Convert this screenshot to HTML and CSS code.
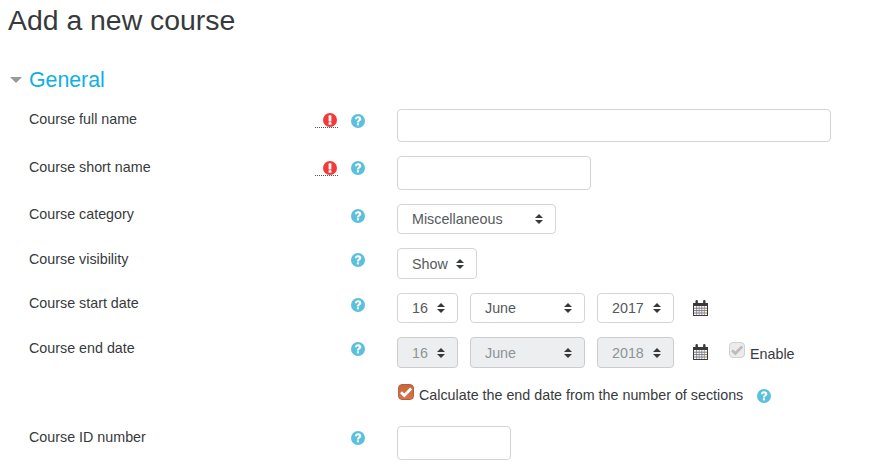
FILE: index.html
```html
<!DOCTYPE html>
<html lang="en">
<head>
  <meta charset="UTF-8" />
  <title>Add a new course</title>
  <link rel="stylesheet" href="styles.css">
</head>
<body>
  <svg class="defs" width="0" height="0">
    <symbol id="i-help" viewBox="0 0 14 14">
      <circle cx="7" cy="7" r="7" fill="#5bc0de"/>
      <path d="M3.9 5.2C4 3.4 5.3 2.3 7.1 2.3c1.9 0 3.2 1.1 3.2 2.7 0 1.1-.6 1.7-1.5 2.3-.6.4-.8.7-.8 1.3H5.900c0-1.200.4-1.800 1.200-2.400.6-.4.900-.7.900-1.100 0-.5-.4-.9-1-.9-.7 0-1 .5-1.100 1.100z" fill="#fff"/>
      <rect x="5.900" y="9.300" width="2.100" height="2.100" fill="#fff"/>
    </symbol>
    <symbol id="i-req" viewBox="0 0 14 14">
      <circle cx="7" cy="7" r="7" fill="#f33a3a"/>
      <rect x="5.600" y="2.200" width="2.800" height="6.200" rx=".5" fill="#fff"/>
      <rect x="5.600" y="9.300" width="2.800" height="2.500" rx=".4" fill="#fff"/>
    </symbol>
    <symbol id="i-arrows" viewBox="0 0 8 10">
      <path d="M4 0l4 4H0zM4 10L0 6h8z" fill="#373a3c"/>
    </symbol>
    <symbol id="i-cal" viewBox="0 0 15 16">
      <path d="M0 3h15v13H0z" fill="#3a3a3a"/>
      <path d="M1 6h13v9H1z" fill="#fff"/>
      <path d="M1 8.200h13M1 10.600h13M1 13h13" stroke="#555" stroke-width=".8"/>
      <path d="M3.600 6v9M8.800 6v9" stroke="#7a74b0" stroke-width=".8"/>
      <path d="M6.200 6v9M11.400 6v9" stroke="#a08a5c" stroke-width=".8"/>
      <rect x="2.500" y="0" width="2.400" height="4.500" rx="1.100" fill="#3a3a3a"/>
      <rect x="10.100" y="0" width="2.400" height="4.500" rx="1.100" fill="#3a3a3a"/>
    </symbol>
    <symbol id="i-check" viewBox="0 0 16 16">
      <path d="M3 8.200l3.300 3.300L13.200 4.400" fill="none" stroke="currentColor" stroke-width="2.800"/>
    </symbol>
  </svg>

  <h1>Add a new course</h1>

  <form class="mform">
    <h2 class="section-head"><span class="caret"></span>General</h2>

    <div class="row row-full">
      <label class="row-label">Course full name</label>
      <span class="req"><svg class="icon"><use href="#i-req"/></svg></span>
      <svg class="icon help"><use href="#i-help"/></svg>
      <div class="field"><input class="text text-wide" type="text"></div>
    </div>

    <div class="row row-short">
      <label class="row-label">Course short name</label>
      <span class="req"><svg class="icon"><use href="#i-req"/></svg></span>
      <svg class="icon help"><use href="#i-help"/></svg>
      <div class="field"><input class="text text-mid" type="text"></div>
    </div>

    <div class="row row-cat">
      <label class="row-label">Course category</label>
      <svg class="icon help"><use href="#i-help"/></svg>
      <div class="field">
        <div class="select w-cat"><span>Miscellaneous</span><svg class="arrows"><use href="#i-arrows"/></svg></div>
      </div>
    </div>

    <div class="row row-vis">
      <label class="row-label">Course visibility</label>
      <svg class="icon help"><use href="#i-help"/></svg>
      <div class="field">
        <div class="select w-show"><span>Show</span><svg class="arrows"><use href="#i-arrows"/></svg></div>
      </div>
    </div>

    <div class="row row-start">
      <label class="row-label">Course start date</label>
      <svg class="icon help"><use href="#i-help"/></svg>
      <div class="field dates">
        <div class="select w-day"><span>16</span><svg class="arrows"><use href="#i-arrows"/></svg></div>
        <div class="select w-month"><span>June</span><svg class="arrows"><use href="#i-arrows"/></svg></div>
        <div class="select w-year"><span>2017</span><svg class="arrows"><use href="#i-arrows"/></svg></div>
        <svg class="cal"><use href="#i-cal"/></svg>
      </div>
    </div>

    <div class="row row-end">
      <label class="row-label">Course end date</label>
      <svg class="icon help"><use href="#i-help"/></svg>
      <div class="field dates">
        <div class="select w-day disabled"><span>16</span><svg class="arrows"><use href="#i-arrows"/></svg></div>
        <div class="select w-month disabled"><span>June</span><svg class="arrows"><use href="#i-arrows"/></svg></div>
        <div class="select w-year disabled"><span>2018</span><svg class="arrows"><use href="#i-arrows"/></svg></div>
        <svg class="cal"><use href="#i-cal"/></svg>
        <span class="check check-off"><svg><use href="#i-check"/></svg></span>
        <span class="check-text">Enable</span>
      </div>
    </div>

    <div class="row row-calc">
      <div class="field calc">
        <span class="check check-on"><svg><use href="#i-check"/></svg></span>
        <span class="calc-text">Calculate the end date from the number of sections</span>
        <svg class="icon calc-help"><use href="#i-help"/></svg>
      </div>
    </div>

    <div class="row row-id">
      <label class="row-label">Course ID number</label>
      <svg class="icon help"><use href="#i-help"/></svg>
      <div class="field"><input class="text text-small" type="text"></div>
    </div>
  </form>
</body>
</html>
```
FILE: styles.css
```css
* { box-sizing: border-box; }
html, body { overflow: hidden; }
body {
  margin: 0;
  height: 474px;
  background: #fff;
  color: #373a3c;
  font-family: "Liberation Sans", Arial, sans-serif;
  font-size: 14.3px;
}
.defs { position: absolute; }
h1 {
  margin: 0;
  padding: 4px 0 0 8px;
  height: 64px;
  font-size: 28.4px;
  line-height: 32px;
  font-weight: 400;
}
.section-head {
  display: flex;
  align-items: center;
  margin: 0;
  padding-left: 10px;
  height: 32px;
  color: #0fb0e6;
  font-size: 21.3px;
  font-weight: 400;
}
.caret {
  width: 0;
  height: 0;
  margin-right: 7px;
  border-left: 6px solid transparent;
  border-right: 6px solid transparent;
  border-top: 6px solid #999;
}
.row {
  display: flex;
  padding-left: 29px;
}
.row-full { margin-top: 13px; height: 47px; }
.row-short { height: 48px; }
.row-cat { height: 44px; }
.row-vis { height: 45px; }
.row-start { height: 44px; }
.row-end { height: 46px; }
.row-calc { height: 43px; }
.row-id { height: 40px; }
.row-label {
  width: 283px;
  line-height: 20px;
}
.row-short .row-label, .row-vis .row-label, .row-end .row-label, .row-id .row-label {
  padding-top: 1px;
}
.row-calc .field { margin-left: 368px; }
.req {
  width: 23px;
  height: 15px;
  margin: 4px 0 0 3px;
  padding-left: 8px;
  border-bottom: 1px dotted #555;
}
.row-short .req { margin-top: 5px; }
.icon { width: 14px; height: 14px; display: block; }
.help { margin: 5px 0 0 13px; }
.row-cat .help, .row-vis .help, .row-start .help, .row-end .help, .row-id .help {
  margin: 5px 0 0 39px;
}
.field {
  margin-left: 32px;
  display: flex;
  align-items: flex-start;
}
.text {
  display: block;
  border: 1px solid #d5d5d5;
  border-radius: 4px;
  background: #fff;
}
.text-wide { width: 434px; height: 33px; }
.text-mid { width: 194px; height: 34px; }
.text-small { width: 114px; height: 34px; }
.select {
  display: flex;
  align-items: center;
  justify-content: space-between;
  height: 30px;
  padding: 0 12px 0 14px;
  border: 1px solid #d5d5d5;
  border-radius: 4px;
  background: #fff;
  color: #55595c;
}
.select.disabled {
  height: 31px;
  background: #eceeef;
  color: #8e9397;
  border-color: #ccc;
}
.arrows { width: 8px; height: 10px; display: block; }
.w-cat { width: 159px; }
.w-show { width: 80px; height: 31px; }
.w-day { width: 61px; }
.w-month { width: 115px; margin-left: 12px; }
.w-year { width: 77px; margin-left: 12px; }
.cal { width: 15px; height: 16px; margin: 7px 0 0 19px; }
.check {
  display: block;
  width: 16px;
  height: 16px;
  border-radius: 4px;
}
.check svg { width: 16px; height: 16px; display: block; margin: -1px; }
.check-off {
  margin: 5px 0 0 21px;
  background: #ececec;
  border: 1px solid #d0d0d0;
  color: #bdbdbd;
}
.check-text { margin: 9px 0 0 5px; line-height: 16px; }
.check-on {
  margin: 1px 0 0 1px;
  background: linear-gradient(#c9673c, #d9744a);
  border: 1px solid #b0603c;
  color: #fff;
}
.calc-text { margin: 3px 0 0 5px; line-height: 18px; }
.calc-help { margin: 6px 0 0 14px; }
```
